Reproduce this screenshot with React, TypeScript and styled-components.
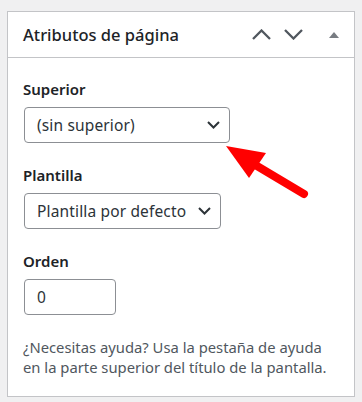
import React from 'react'
import styled, { createGlobalStyle } from 'styled-components'

const GlobalStyle = createGlobalStyle`
    html, body {
        margin: 0;
        padding: 0;
        background: #f0f0f1;
    }
    body {
        font-family: "Noto Sans", "Open Sans", sans-serif;
        color: #1d2327;
    }
`

const Page = styled.div`
    padding: 11px 7px 0 7px;
    width: 348px;
    position: relative;
`

const Panel = styled.section`
    position: relative;
    background: #fff;
    border: 1px solid #c3c4c7;
    height: 384px;
`

const Header = styled.header`
    display: flex;
    align-items: center;
    height: 45px;
    border-bottom: 1px solid #c3c4c7;
    padding: 0 15px 0 15px;
`

const Title = styled.h2`
    flex: 1;
    margin: 0;
    font-size: 16.5px;
    font-weight: 500;
    color: #1d2327;
`

const HandleActions = styled.div`
    display: flex;
    align-items: center;
`

const HandleButton = styled.span<{ $gap: number }>`
    display: inline-flex;
    align-items: center;
    justify-content: center;
    margin-left: ${({ $gap }) => $gap}px;
    height: 20px;
    color: #50575e;
`

const Body = styled.div`
    padding: 20px 15px 0 15px;
`

const Label = styled.p`
    margin: 0 0 7px 0;
    font-size: 15px;
    font-weight: 600;
    line-height: 22px;
    color: #1d2327;
`

const Field = styled.div<{ $width: number }>`
    display: flex;
    align-items: center;
    justify-content: space-between;
    box-sizing: border-box;
    width: ${({ $width }) => $width}px;
    height: 36px;
    margin: 0 0 21px 1px;
    padding: 0 9px 0 12px;
    border: 1px solid #8c8f94;
    border-radius: 4px;
    background: #fff;
    font-size: 15.5px;
    letter-spacing: 0.15px;
    color: #2c3338;
`

const Help = styled.p`
    max-width: 315px;
    margin: 0;
    padding-top: 1px;
    font-size: 14.8px;
    line-height: 20px;
    color: #50575e;
`

const Overlay = styled.svg`
    position: absolute;
    left: 0;
    top: 0;
    pointer-events: none;
`

const Chevron = ({ up, width = 13, stroke = 2 }: { up?: boolean; width?: number; stroke?: number }) => {
    const h = Math.round(width / 2.2)
    return (
        <svg width={width} height={h + 2} viewBox={`0 0 ${width} ${h + 2}`}>
            <polyline
                points={
                    up
                        ? `1,${h + 1} ${width / 2},1.5 ${width - 1},${h + 1}`
                        : `1,1 ${width / 2},${h + 0.5} ${width - 1},1`
                }
                fill="none"
                stroke="currentColor"
                strokeWidth={stroke}
            />
        </svg>
    )
}

const SelectBox = ({ value, width }: { value: string; width: number }) => (
    <Field $width={width}>
        <span>{value}</span>
        <Chevron width={13} />
    </Field>
)

export default function App() {
    return (
        <Page>
            <GlobalStyle />
            <Panel>
                <Header>
                    <Title>Atributos de página</Title>
                    <HandleActions>
                        <HandleButton $gap={0}>
                            <Chevron up width={19} stroke={2.3} />
                        </HandleButton>
                        <HandleButton $gap={13}>
                            <Chevron width={19} stroke={2.3} />
                        </HandleButton>
                        <HandleButton $gap={26}>
                            <svg width="10" height="6" viewBox="0 0 10 6">
                                <polygon points="5,0 10,6 0,6" fill="#787c82" />
                            </svg>
                        </HandleButton>
                    </HandleActions>
                </Header>
                <Body>
                    <Label>Superior</Label>
                    <SelectBox value="(sin superior)" width={206} />
                    <Label>Plantilla</Label>
                    <SelectBox value="Plantilla por defecto" width={197} />
                    <Label>Orden</Label>
                    <Field $width={92}>
                        <span>0</span>
                    </Field>
                    <Help>
                        ¿Necesitas ayuda? Usa la pestaña de ayuda en la parte superior del título de la pantalla.
                    </Help>
                </Body>
            </Panel>
            <Overlay width="362" height="402" viewBox="0 0 362 402">
                <line x1="252" y1="163" x2="304" y2="194" stroke="#ff0000" strokeWidth="8" strokeLinecap="round" />
                <polygon points="226,146 266,153 249,178" fill="#ff0000" />
            </Overlay>
        </Page>
    )
}
